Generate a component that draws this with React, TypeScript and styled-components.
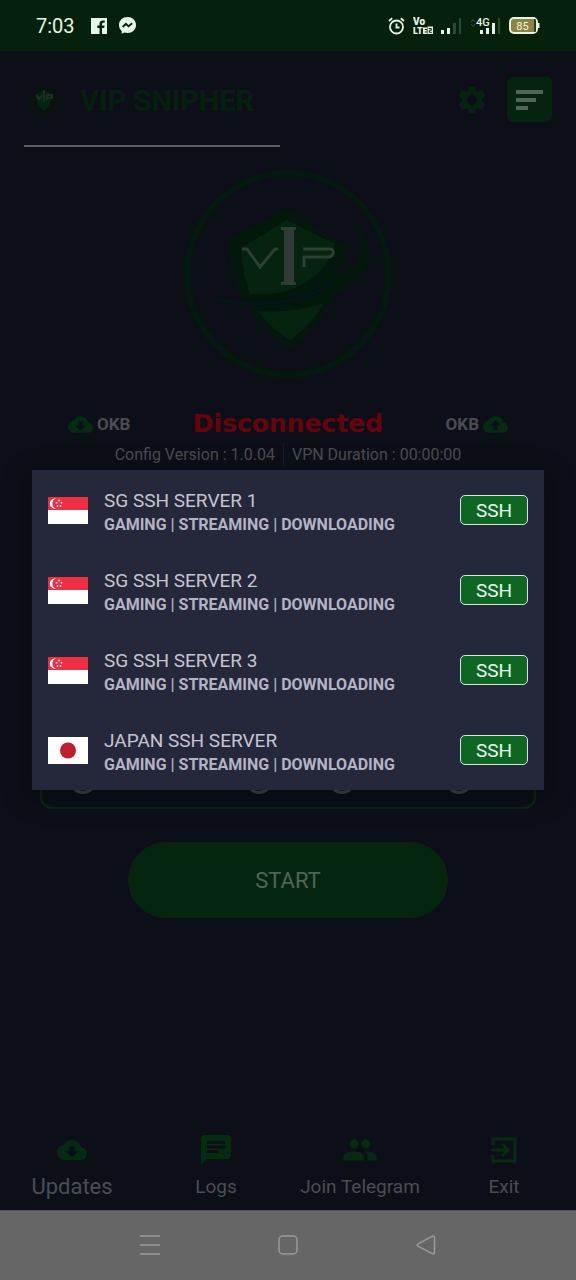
import React from 'react';
import styled, { createGlobalStyle } from 'styled-components';
import { MdSettings, MdCloudDownload, MdCloudUpload, MdChat, MdPeople } from 'react-icons/md';

const Global = createGlobalStyle`
  *, *::before, *::after { box-sizing: border-box; }
  body { margin: 0; background: #0d0f18; font-family: Roboto, sans-serif; }
  button { font: inherit; border: 0; padding: 0; background: none; cursor: pointer; }
  h1, p, ul { margin: 0; padding: 0; list-style: none; }
  svg { display: block; flex: none; }
`;

const Page = styled.div`
  min-height: 100vh;
  display: flex;
  flex-direction: column;
`;

const StatusBar = styled.header`
  height: 51px;
  padding: 0 36px;
  display: flex;
  align-items: center;
  justify-content: space-between;
  background: #05210b;
  color: #e6f5e6;
`;

const StatusGroup = styled.div<{ $gap: number }>`
  display: flex;
  align-items: center;
  gap: ${(p) => p.$gap}px;
`;

const Clock = styled.time`
  font-size: 20px;
  line-height: 24px;
  margin-right: 4px;
`;

const Screen = styled.main`
  flex: 1;
  position: relative;
  display: flex;
  flex-direction: column;
`;

const AppBar = styled.div`
  display: flex;
  align-items: center;
  gap: 16px;
  height: 94px;
  padding: 3px 24px 0;
`;

const Title = styled.h1`
  flex: 1;
  padding-top: 2px;
  font-size: 29px;
  line-height: 32px;
  font-weight: 700;
  color: #06200f;
`;

const IconButton = styled.button<{ $filled?: boolean }>`
  width: 45px;
  height: 45px;
  display: grid;
  place-items: center;
  border-radius: 6px;
  color: #06230f;
  background: ${(p) => (p.$filled ? '#05240f' : 'transparent')};
`;

const Actions = styled.div`
  display: flex;
  gap: 13px;
`;

const TabLine = styled.div`
  width: calc(50% - 32px);
  height: 2px;
  margin-left: 24px;
  background: #5c5d62;
`;

const Emblem = styled.div`
  display: flex;
  justify-content: center;
  padding: 17px 0 24px;
`;

const Stats = styled.div`
  display: flex;
  align-items: center;
  justify-content: space-between;
  height: 32px;
  padding: 0 68px;
`;

const Traffic = styled.span`
  display: flex;
  align-items: center;
  gap: 4px;
  font-size: 17px;
  font-weight: 700;
  color: #4b4c51;
`;

const State = styled.strong`
  font: 700 25px/32px "DejaVu Sans", sans-serif;
  color: #67030c;
`;

const Details = styled.p`
  display: flex;
  justify-content: center;
  font-size: 16px;
  line-height: 24px;
  color: #4b4c51;
  margin-top: 3px;
`;

const Detail = styled.span`
  padding: 0 8px;
  & + & { border-left: 1px solid #191b23; }
`;

const OptionCard = styled.div`
  height: 328px;
  margin: 14px 40px 0;
  padding: 0 28px 13px;
  border: 2px solid #062a0f;
  border-radius: 12px;
  display: flex;
  align-items: flex-end;
`;

const OptionDot = styled.span<{ $space: number }>`
  width: 26px;
  height: 26px;
  margin-left: ${(p) => p.$space}px;
  border-radius: 50%;
  border: 3px solid #44454c;
`;

const StartButton = styled.button`
  width: calc(100% - 256px);
  height: 76px;
  margin: 33px auto 0;
  border-radius: 38px;
  border: 1px solid #10210f;
  background: #05260e;
  color: #4f6653;
  font-size: 22px;
`;

const BottomNav = styled.nav`
  margin-top: auto;
  height: 96px;
  display: grid;
  grid-template-columns: repeat(4, 1fr);
`;

const NavItem = styled.button<{ $active?: boolean }>`
  display: grid;
  grid-template-rows: 48px 26px;
  padding-top: 12px;
  place-items: center;
  align-content: start;
  color: #4b4d53;
  font-size: ${(p) => (p.$active ? 22 : 19)}px;
  line-height: 26px;
  svg { color: #052b10; }
`;

const Overlay = styled.div`
  position: absolute;
  inset: 0;
  display: grid;
  align-items: center;
  padding: 0 32px 1px;
`;

const ServerDialog = styled.div`
  background: #25273b;
  box-shadow: 0 6px 24px 2px rgba(4, 5, 10, 0.4);
`;

const ServerRow = styled.li`
  height: 80px;
  padding: 0 16px;
  display: flex;
  align-items: center;
  gap: 16px;
`;

const ServerText = styled.div`
  flex: 1;
  padding-top: 5px;
`;

const ServerName = styled.p`
  font-size: 19px;
  line-height: 24px;
  color: #c5c5cf;
`;

const ServerTags = styled.p`
  font-size: 16px;
  line-height: 24px;
  font-weight: 700;
  color: #b4b4c4;
`;

const SshButton = styled.button`
  width: 68px;
  height: 30px;
  border: 1px solid #d5e5d8;
  border-radius: 5px;
  background: #0b6722;
  color: #eefaf0;
  font-size: 19px;
`;

const SystemNav = styled.nav`
  height: 70px;
  padding: 0 81px 2px;
  display: grid;
  grid-template-columns: repeat(3, 1fr);
  place-items: center;
  background: #666;
  border-top: 1px solid #565656;
`;

const FacebookIcon = () => (
  <svg width="16" height="16" viewBox="0 0 16 16">
    <path fill="#e6f5e6" d="M0 0h16v16h-5v-6h2.200l.4-2.500H11V6.300c0-.9.4-1.500 1.500-1.500h1.200V2.600C11 2 8.500 2.800 8.500 5.800v1.700H6.300V10h2.200v6H0z" />
  </svg>
);

const MessengerIcon = () => (
  <svg width="17" height="17" viewBox="0 0 17 17">
    <path fill="#e6f5e6" d="M8.500 0C3.700 0 0 3.500 0 8c0 2.500 1 4.500 2.700 6v2.700l2.700-1.200c1 .3 2 .5 3.100.5 4.800 0 8.500-3.500 8.500-8S13.300 0 8.500 0z" />
    <path fill="none" stroke="#05210b" strokeWidth="1.800" d="M3.700 10l3.200-3.200 2.600 2.500 3.700-3" />
  </svg>
);

const AlarmIcon = () => (
  <svg width="17" height="18" viewBox="0 0 17 18" fill="none" stroke="#e6f5e6" strokeWidth="1.800">
    <circle cx="8.500" cy="10" r="6.500" />
    <path d="M8.500 6.500V10.500h3M1 4l3.200-2.700M16 4l-3.200-2.700" />
  </svg>
);

const VolteIcon = () => (
  <svg width="20" height="18" viewBox="0 0 20 18" fill="#e6f5e6" fontFamily="Roboto" fontWeight="900">
    <text x="0" y="8" fontSize="10">Vo</text>
    <text x="0" y="17" fontSize="9">LT</text>
    <path d="M10 10.500h4v1.500h-2.200v1h2v1.500h-2v1H14V17h-4z" />
    <rect x="14.500" y="9.500" width="5.500" height="7.500" />
    <path fill="none" stroke="#05210b" d="M15.800 11.500h2.500v1.800h-2v2h2.500" />
  </svg>
);

const SignalIcon = () => (
  <svg width="21" height="18" viewBox="0 0 21 18" fill="#e6f5e6">
    <path d="M0 13h3v4H0zM6 11h3v6H6z" />
    <path fill="#2b4a31" d="M12 6h3v11h-3zM18 1h2v16h-2z" />
  </svg>
);

const Signal4gIcon = () => (
  <svg width="31" height="18" viewBox="0 0 31 18" fill="#e6f5e6" fontFamily="Roboto" fontWeight="500">
    <path fill="none" stroke="#3b573f" d="M1 5l2-2.500L5 5M1 7l2 2.500L5 7" />
    <text x="6" y="9" fontSize="11">4G</text>
    <path d="M10 13h3v4h-3zM16 11h3v6h-3zM22 6h3v11h-3z" />
    <path fill="#2b4a31" d="M28 1h2v16h-2z" />
  </svg>
);

const BatteryIcon = () => (
  <svg width="31" height="18" viewBox="0 0 31 18">
    <rect x="1" y="1" width="27" height="15" rx="4" fill="#8b8444" stroke="#e6f5e6" strokeWidth="2" />
    <path fill="#2b3a1c" d="M25 2h1q1 0 1 1.500v10q0 1.500-1 1.500h-1z" />
    <path fill="#e6f5e6" d="M29 6h1.500v5H29z" />
    <text x="13.500" y="12.500" fontSize="11" textAnchor="middle" fill="#f5f5dc" fontFamily="Roboto">85</text>
  </svg>
);

const VipShield = () => (
  <svg width="220" height="220" viewBox="178 164 220 220" fill="none">
    <circle cx="288" cy="274" r="101" stroke="#07150f" strokeWidth="9" />
    <circle cx="288" cy="274" r="101" stroke="#04190f" strokeWidth="5" />
    <path fill="#03170d" d="M287 208L229 238c-2 40 12 77 61 112 36-28 53-57 57-102z" />
    <path fill="#03170d" d="M350 216c34 30 20 64-20 82-34 14-84 12-130 0 44 4 92 6 126-12 34-17 44-38 24-70z" />
    <path fill="#05230f" d="M287 220L241 248c1 18 4 32 9 46 34 3 66-8 84-43l1-7z" />
    <path fill="#05230f" d="M258 311c22 2 46-1 66-8-8 15-20 27-34 37-13-8-23-17-32-29z" />
    <path stroke="#08131a" strokeWidth="4" d="M215 299c46 9 92 4 120-18" />
    <path stroke="#2c3f33" strokeWidth="3" d="M242 249h5l13 18 15-18h3M304 267v-10h25c5-1 6-8 1-8h-27" />
    <path fill="#303b35" d="M281 227h15v3h-2v52h2v3h-15v-3h3v-52h-3z" />
  </svg>
);

const SmallEmblem = () => (
  <svg width="40" height="36" viewBox="0 0 40 36">
    <circle cx="20" cy="18" r="15" fill="#091211" />
    <path fill="#05240f" d="M20 8l-8 4c0 8 3 12 8 17 5-5 8-9 8-17z" />
    <path stroke="#1c2f20" strokeWidth="2" fill="none" d="M12 13l3 4 3-4M20 8v12M23 18v-5h5v3h-5" />
  </svg>
);

const MenuIcon = () => (
  <svg width="27" height="20" viewBox="0 0 27 20" fill="#4f6653">
    <path d="M0 0h27v4H0zM0 8h20v4H0zM0 16h12v4H0z" />
  </svg>
);

const ExitIcon = () => (
  <svg width="26" height="26" viewBox="0 0 26 26" fill="none" stroke="currentColor" strokeWidth="3">
    <path d="M2 8V2h22v22H2v-6M0 13h16M11 7l6 6-6 6" />
  </svg>
);

const SingaporeFlag = () => (
  <svg width="40" height="27" viewBox="0 0 40 27">
    <path fill="#fff" d="M0 0h40v27H0z" />
    <path fill="#ed2f43" d="M0 0h40v13H0z" />
    <path fill="#fff" d="M8 1.500a5.200 5.200 0 1 0 0 10.200 5.400 5.400 0 0 1 0-10.200z" />
    <g fill="#fbc9cf">
      <circle cx="11" cy="3.500" r="1" />
      <circle cx="8.500" cy="5.800" r="1" />
      <circle cx="13.500" cy="5.800" r="1" />
      <circle cx="9.500" cy="9" r="1" />
      <circle cx="12.500" cy="9" r="1" />
    </g>
  </svg>
);

const JapanFlag = () => (
  <svg width="40" height="27" viewBox="0 0 40 27">
    <path fill="#fff" d="M0 0h40v27H0z" />
    <circle cx="20" cy="13.500" r="8" fill="#be1e2d" />
  </svg>
);

const servers = [
  { name: 'SG SSH SERVER 1', Flag: SingaporeFlag },
  { name: 'SG SSH SERVER 2', Flag: SingaporeFlag },
  { name: 'SG SSH SERVER 3', Flag: SingaporeFlag },
  { name: 'JAPAN SSH SERVER', Flag: JapanFlag },
];

export default function App() {
  return (
    <>
      <Global />
      <Page>
        <StatusBar>
          <StatusGroup $gap={12}>
            <Clock>7:03</Clock>
            <FacebookIcon />
            <MessengerIcon />
          </StatusGroup>
          <StatusGroup $gap={8}>
            <AlarmIcon />
            <VolteIcon />
            <SignalIcon />
            <Signal4gIcon />
            <BatteryIcon />
          </StatusGroup>
        </StatusBar>
        <Screen>
          <AppBar>
            <SmallEmblem />
            <Title>VIP SNIPHER</Title>
            <Actions>
              <IconButton aria-label="Settings"><MdSettings size={34} /></IconButton>
              <IconButton $filled aria-label="Menu"><MenuIcon /></IconButton>
            </Actions>
          </AppBar>
          <TabLine />
          <Emblem><VipShield /></Emblem>
          <Stats>
            <Traffic><MdCloudDownload size={25} color="#052b10" />OKB</Traffic>
            <State>Disconnected</State>
            <Traffic>OKB<MdCloudUpload size={25} color="#052b10" /></Traffic>
          </Stats>
          <Details>
            <Detail>Config Version : 1.0.04</Detail>
            <Detail>VPN Duration : 00:00:00</Detail>
          </Details>
          <OptionCard>
            <OptionDot $space={0} />
            <OptionDot $space={150} />
            <OptionDot $space={57} />
            <OptionDot $space={91} />
          </OptionCard>
          <StartButton>START</StartButton>
          <BottomNav>
            <NavItem $active><MdCloudDownload size={30} />Updates</NavItem>
            <NavItem><MdChat size={36} />Logs</NavItem>
            <NavItem><MdPeople size={36} />Join Telegram</NavItem>
            <NavItem><ExitIcon />Exit</NavItem>
          </BottomNav>
          <Overlay>
            <ServerDialog role="dialog" aria-label="Servers">
              <ul>
                {servers.map(({ name, Flag }) => (
                  <ServerRow key={name}>
                    <Flag />
                    <ServerText>
                      <ServerName>{name}</ServerName>
                      <ServerTags>GAMING | STREAMING | DOWNLOADING</ServerTags>
                    </ServerText>
                    <SshButton>SSH</SshButton>
                  </ServerRow>
                ))}
              </ul>
            </ServerDialog>
          </Overlay>
        </Screen>
        <SystemNav>
          <IconButton aria-label="Recent apps">
            <svg width="20" height="20" viewBox="0 0 20 20" stroke="#9a9a9a" strokeWidth="1.500"><path d="M0 1h20M0 10h20M0 19h20" /></svg>
          </IconButton>
          <IconButton aria-label="Home">
            <svg width="20" height="20" viewBox="0 0 20 20" fill="none" stroke="#9a9a9a" strokeWidth="1.500"><rect x="1" y="1" width="18" height="18" rx="4" /></svg>
          </IconButton>
          <IconButton aria-label="Back">
            <svg width="20" height="20" viewBox="0 0 20 20" fill="none" stroke="#9a9a9a" strokeWidth="1.500"><path d="M16.500 1.200L2 8.800q-1.500 1.200 0 2.400l14.500 7.600q2 .4 2-1.500V2.700q0-1.900-2-1.500z" /></svg>
          </IconButton>
        </SystemNav>
      </Page>
    </>
  );
}
